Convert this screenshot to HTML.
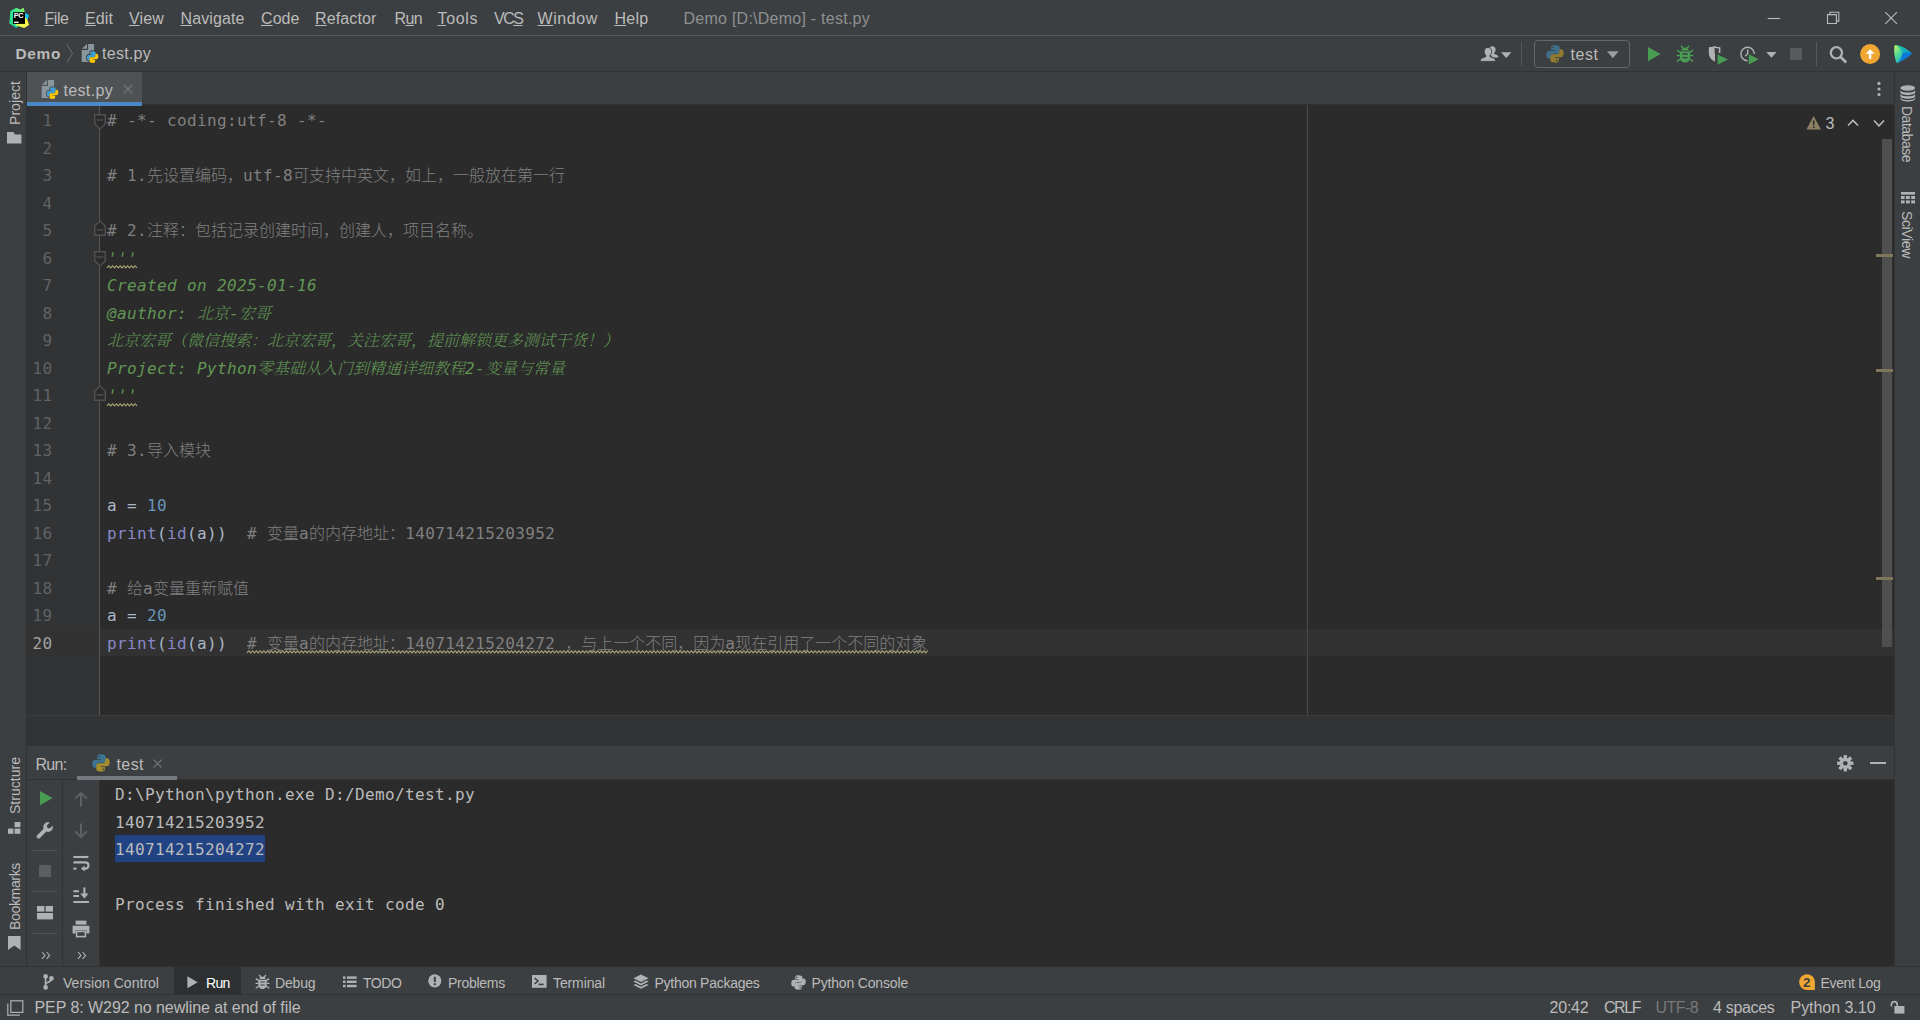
<!DOCTYPE html>
<html lang="zh">
<head>
<meta charset="utf-8">
<title>Demo [D:\Demo] - test.py</title>
<style>
*{box-sizing:border-box;margin:0;padding:0}
html,body{width:1920px;height:1020px;overflow:hidden;background:#3c3f41}
body{position:relative;font-family:"Liberation Sans","Noto Sans CJK SC",sans-serif;color:#bbb;font-size:16px;-webkit-font-smoothing:antialiased}
.a{position:absolute}
.t{position:absolute;white-space:pre;line-height:20px;height:20px}
.u{font-size:16px;color:#bbbbbb}
.s{font-size:14px;color:#bbbbbb}
.m u{text-decoration:underline;text-underline-offset:0.5px;text-decoration-thickness:1px}
.code{position:absolute;white-space:pre;font-family:"DejaVu Sans Mono","Liberation Mono","Noto Sans CJK SC",monospace;font-size:16px;letter-spacing:0.368px;line-height:27px;height:27px;color:#a9b7c6}
.ln{position:absolute;white-space:pre;font-family:"DejaVu Sans Mono","Liberation Mono",monospace;font-size:16px;letter-spacing:0.368px;line-height:27px;height:27px;color:#606366;width:60px;text-align:right;left:-7.5px}
.cj{font-family:"Noto Sans CJK SC",sans-serif;font-size:16px;letter-spacing:0;font-weight:300;line-height:0}
.cji{font-family:"Noto Serif CJK SC","Noto Sans CJK SC",serif;font-size:16px;letter-spacing:0;font-style:italic;line-height:0;font-weight:300}
.c{color:#808080}
.g{color:#629755;font-style:italic}
.q{display:inline-block;transform:skewX(-12deg);font-style:normal}
.n{color:#6897bb}
.b{color:#8888c6}
.con{position:absolute;white-space:pre;font-family:"DejaVu Sans Mono","Liberation Mono",monospace;font-size:16px;letter-spacing:0.368px;line-height:27px;height:27px;color:#bbbbbb;left:115px}
.v{position:absolute;white-space:pre;font-size:14px;color:#bbb;line-height:16px;height:16px;transform-origin:0 0}
svg{position:absolute;overflow:visible}
</style>
</head>
<body>
<div class="a" style="left:0;top:0;width:1920px;height:35px;background:#3c3f41"></div>
<div class="a" style="left:0;top:35px;width:1920px;height:1px;background:#555759"></div>
<svg style="left:9px;top:7px" width="21" height="22" viewBox="0 0 21 22">
<defs>
<linearGradient id="pg1" x1="0" y1="1" x2="1" y2="0"><stop offset="0" stop-color="#1ed68c"/><stop offset="0.55" stop-color="#2fe58f"/><stop offset="1" stop-color="#9bf25c"/></linearGradient>
<linearGradient id="pg2" x1="0" y1="1" x2="1" y2="0"><stop offset="0" stop-color="#8ef564"/><stop offset="0.35" stop-color="#f3f74b"/><stop offset="1" stop-color="#f7f24a"/></linearGradient>
</defs>
<path d="M0.3 16.4 L1.4 4 L7.4 0.8 L11 2.4 L14.7 0.7 L15.9 6 L16 14 L7.2 20.8 Z" fill="url(#pg1)"/>
<path d="M15.9 9.4 L17.6 10.4 L20.1 18 L15.2 21.1 L6.4 18.6 L7.2 14 Z" fill="url(#pg2)"/>
<path d="M15.9 5.6 L20.1 8.4 L18.6 12.4 L15.9 10.2 Z" fill="#10c6f4"/>
<path d="M5.6 18.2 L8 20.2 L7.2 20.9 L4.4 19 Z" fill="#14b6c8"/>
<rect x="4" y="5.2" width="12" height="11.7" fill="#000"/>
<text x="4.7" y="11.3" font-family="Liberation Sans,sans-serif" font-weight="bold" font-size="7.3" fill="#fff" letter-spacing="-0.35">PC</text>
<rect x="5" y="14.6" width="4.7" height="1.3" fill="#fff"/>
</svg>
<div class="t u m" style="letter-spacing:-0.449px;left:44.5px;top:9px"><u>F</u>ile</div>
<div class="t u m" style="letter-spacing:0.105px;left:85px;top:9px"><u>E</u>dit</div>
<div class="t u m" style="letter-spacing:0.148px;left:129px;top:9px"><u>V</u>iew</div>
<div class="t u m" style="letter-spacing:0.105px;left:180.5px;top:9px"><u>N</u>avigate</div>
<div class="t u m" style="letter-spacing:0.059px;left:261px;top:9px"><u>C</u>ode</div>
<div class="t u m" style="letter-spacing:0.127px;left:315px;top:9px"><u>R</u>efactor</div>
<div class="t u m" style="letter-spacing:-0.625px;left:394.5px;top:9px">R<u>u</u>n</div>
<div class="t u m" style="letter-spacing:0.628px;left:437.5px;top:9px"><u>T</u>ools</div>
<div class="t u m" style="letter-spacing:-1.469px;left:494px;top:9px">VC<u>S</u></div>
<div class="t u m" style="letter-spacing:0.596px;left:537.5px;top:9px"><u>W</u>indow</div>
<div class="t u m" style="letter-spacing:0.270px;left:614.5px;top:9px"><u>H</u>elp</div>
<div class="t u" style="letter-spacing:0.250px;left:683.5px;top:9px;color:#8e9092">Demo [D:\Demo] - test.py</div>
<svg style="left:1760px;top:6px" width="150" height="24" viewBox="0 0 150 24" fill="none" stroke="#bbbbbb" stroke-width="1.1">
<path d="M7.7 12.5 H20.2"/>
<path d="M67.5 8.6 H76.4 V17.5 H67.5 Z M69.9 8.6 V6.2 H78.8 V15.1 H76.4"/>
<path d="M125.3 6.2 L136.9 17.8 M136.9 6.2 L125.3 17.8"/>
</svg>

<div class="a" style="left:0;top:36px;width:1920px;height:35px;background:#3c3f41"></div>
<div class="a" style="left:0;top:71px;width:1920px;height:1px;background:#323232"></div>
<div class="t u" style="letter-spacing:0.684px;left:15.5px;top:43.5px;font-weight:bold;font-size:15.4px">Demo</div>
<svg style="left:66px;top:44px" width="8" height="19" viewBox="0 0 8 19" fill="none" stroke="#6b6e70" stroke-width="1"><path d="M1 0.5 L6.5 9.5 L1 18.5"/></svg>
<svg style="left:81px;top:44px" width="18" height="20" viewBox="0 0 18 20">
<path d="M7.1 0 H13.1 V18 H0.7 V6.1 H7.1z" fill="#8a969e"/><path d="M0.9 4.8 L6 0.1 V4.8z" fill="#8a969e"/>
<g transform="translate(5.7 7) scale(0.655 0.678)"><path d="M8.9 0.3 c-3.6 0 -3.8 1.6 -3.8 2.6 v2.1 h4 v0.8 h-5.9 c-1.6 0 -2.9 1.2 -2.9 4 c0 2.8 1.2 4 2.7 4 h1.6 v-2.4 c0 -1.6 1.2 -2.7 2.7 -2.7 h4 c1.3 0 2.4 -1 2.4 -2.4 v-3.4 c0 -1.3 -1.2 -2.6 -4.8 -2.6z" fill="#3c3f41" stroke="#3c3f41" stroke-width="2.6"/><path d="M9.1 17.7 c3.6 0 3.8 -1.6 3.8 -2.6 v-2.1 h-4 v-0.8 h5.9 c1.6 0 2.9 -1.2 2.9 -4 c0 -2.8 -1.2 -4 -2.7 -4 h-1.6 v2.4 c0 1.6 -1.2 2.7 -2.7 2.7 h-4 c-1.3 0 -2.4 1 -2.4 2.4 v3.4 c0 1.3 1.2 2.6 4.8 2.6z" fill="#3c3f41" stroke="#3c3f41" stroke-width="2.6"/>
<path d="M8.9 0.3 c-3.6 0 -3.8 1.6 -3.8 2.6 v2.1 h4 v0.8 h-5.9 c-1.6 0 -2.9 1.2 -2.9 4 c0 2.8 1.2 4 2.7 4 h1.6 v-2.4 c0 -1.6 1.2 -2.7 2.7 -2.7 h4 c1.3 0 2.4 -1 2.4 -2.4 v-3.4 c0 -1.3 -1.2 -2.6 -4.8 -2.6z" fill="#40a0da"/><path d="M9.1 17.7 c3.6 0 3.8 -1.6 3.8 -2.6 v-2.1 h-4 v-0.8 h5.9 c1.6 0 2.9 -1.2 2.9 -4 c0 -2.8 -1.2 -4 -2.7 -4 h-1.6 v2.4 c0 1.6 -1.2 2.7 -2.7 2.7 h-4 c-1.3 0 -2.4 1 -2.4 2.4 v3.4 c0 1.3 1.2 2.6 4.8 2.6z" fill="#fcc600"/></g>
</svg>
<div class="t u" style="letter-spacing:0.266px;left:102px;top:43.5px">test.py</div>
<!-- right toolbar -->
<svg style="left:1480px;top:46px" width="34" height="16" viewBox="0 0 34 16">
<path d="M12.6 0.2 c1.8 0 3 1.5 3 3.4 c0 1.4 -0.6 2.6 -1.5 3.3 v0.9 l3.3 1.5 c0.5 0.2 0.8 0.7 0.8 1.3 v1 h-5.4 l-2.6 -3 v-1.5 c-1 -0.7 -1.4 -2 -1.4 -3.4 c0 -1.9 1.6 -3.5 3.8 -3.5z" fill="#afb1b3"/>
<path d="M8 1.4 c2.2 0 3.7 1.8 3.7 4.1 c0 1.7 -0.7 3.1 -1.8 3.9 v1.1 l4.4 2 c0.7 0.3 1.1 0.9 1.1 1.7 v1.2 h-15 v-1.2 c0 -0.8 0.4 -1.4 1.1 -1.7 l4.5 -2 v-1.1 c-1.1 -0.8 -1.8 -2.2 -1.8 -3.9 c0 -2.3 1.6 -4.1 3.8 -4.1z" fill="#afb1b3" stroke="#3c3f41" stroke-width="0.9"/>
<path d="M21 6.2 h10.5 l-5.25 5.8z" fill="#afb1b3"/>
</svg>
<div class="a" style="left:1521px;top:42px;width:1px;height:24px;background:#555759"></div>
<div class="a" style="left:1534px;top:40px;width:96px;height:28px;border:1px solid #646769;border-radius:4px"></div>
<svg style="left:1546px;top:45px" width="18" height="18" viewBox="0 0 18 18">
<path d="M8.9 0.3 c-3.6 0 -3.8 1.6 -3.8 2.6 v2.1 h4 v0.8 h-5.9 c-1.6 0 -2.9 1.2 -2.9 4 c0 2.8 1.2 4 2.7 4 h1.6 v-2.4 c0 -1.6 1.2 -2.7 2.7 -2.7 h4 c1.3 0 2.4 -1 2.4 -2.4 v-3.4 c0 -1.3 -1.2 -2.6 -4.8 -2.6z" fill="#3d6f8c"/>
<circle cx="6.9" cy="2.6" r="0.8" fill="#3c3f41"/>
<path d="M9.1 17.7 c3.6 0 3.8 -1.6 3.8 -2.6 v-2.1 h-4 v-0.8 h5.9 c1.6 0 2.9 -1.2 2.9 -4 c0 -2.8 -1.2 -4 -2.7 -4 h-1.6 v2.4 c0 1.6 -1.2 2.7 -2.7 2.7 h-4 c-1.3 0 -2.4 1 -2.4 2.4 v3.4 c0 1.3 1.2 2.6 4.8 2.6z" fill="#907a30"/>
<circle cx="11.1" cy="15.4" r="0.8" fill="#3c3f41"/>
</svg>
<div class="t u" style="letter-spacing:0.551px;left:1570.5px;top:44.5px">test</div>
<svg style="left:1607px;top:51px" width="12" height="8" viewBox="0 0 12 8"><path d="M0 0.3 H11.6 L5.8 7.2z" fill="#9a9da0"/></svg>
<svg style="left:1647px;top:46px" width="15" height="16" viewBox="0 0 15 16"><path d="M1 1 L13.6 8 L1 15.2z" fill="#499c54"/></svg>
<svg style="left:1676px;top:45px" width="18" height="18" viewBox="0 0 18 18">
<g fill="none" stroke="#499c54" stroke-width="1.5"><path d="M5 0.6 L7 3.2 M13 0.6 L11 3.2"/><path d="M1 5 L4.4 7.4 M17 5 L13.6 7.4 M0.6 10.6 H4.4 M17.4 10.6 H13.6 M1 16.4 L4.6 13.8 M17 16.4 L13.4 13.8"/></g>
<path d="M5.2 5.4 C5.4 3.6 7 2.4 9 2.4 C11 2.4 12.6 3.6 12.8 5.4z" fill="#499c54"/>
<path d="M4 6.4 H14 V12.4 C14 15.4 11.8 17.6 9 17.6 C6.2 17.6 4 15.4 4 12.4z" fill="#499c54"/>
<path d="M6.4 9 H11.6 M6.4 12.6 H11.6" stroke="#3c3f41" stroke-width="1.4"/>
</svg>
<svg style="left:1708px;top:46px" width="21" height="19" viewBox="0 0 21 19">
<path d="M0.8 1.2 C3 1.2 5 0.8 6.6 0 C8.2 0.8 10.2 1.2 12.4 1.2 V7 H7 V15.6 C3.2 13.8 0.8 10.8 0.8 6.4z" fill="#afb1b3"/>
<path d="M6.6 1.8 V7 H10.8 V2.6 C9.2 2.5 7.8 2.2 6.6 1.8z" fill="#3c3f41"/>
<path d="M9.6 8.4 L20 13.6 L9.6 18.8z" fill="#499c54"/>
</svg>
<svg style="left:1739px;top:45px" width="40" height="20" viewBox="0 0 40 20">
<path d="M8.6 1.6 A7.4 7.4 0 1 0 8.6 16.4 V15 A6 6 0 1 1 14.6 9 H16 A7.4 7.4 0 0 0 8.6 1.6z" fill="#afb1b3"/>
<path d="M8 4.6 H9.4 V9 L6.6 11.8 L5.6 10.8 L8 8.4z" fill="#afb1b3"/>
<path d="M9.8 9.2 L19.6 14.2 L9.8 19.4z" fill="#499c54"/>
<path d="M27.2 7 H37.6 L32.4 12.8z" fill="#afb1b3"/>
</svg>
<div class="a" style="left:1790px;top:47.5px;width:12px;height:12.5px;background:#585a5c"></div>
<div class="a" style="left:1816px;top:42px;width:1px;height:24px;background:#555759"></div>
<svg style="left:1829px;top:45px" width="19" height="19" viewBox="0 0 19 19" fill="none" stroke="#afb1b3"><circle cx="7.4" cy="7.8" r="5.6" stroke-width="2.3"/><path d="M11.4 11.8 L17.2 17.4" stroke-width="2.8"/></svg>
<svg style="left:1859px;top:43px" width="22" height="22" viewBox="0 0 22 22"><circle cx="11.1" cy="11" r="10" fill="#f0a732"/><path d="M11.1 6.2 L15.6 10.8 H12.3 V15.8 H9.9 V10.8 H6.6z" fill="#fff"/></svg>
<svg style="left:1893px;top:44px" width="20" height="20" viewBox="0 0 20 20">
<defs><linearGradient id="cw1" x1="0" y1="0" x2="1" y2="1"><stop offset="0" stop-color="#21d789"/><stop offset="1" stop-color="#087cfa"/></linearGradient>
<linearGradient id="cw2" x1="0" y1="0" x2="0.6" y2="1"><stop offset="0" stop-color="#d7f05a"/><stop offset="0.5" stop-color="#5fe08c"/><stop offset="1" stop-color="#1fb4c4"/></linearGradient></defs>
<path d="M3 1 C2.2 1 1.6 1.6 1.5 2.6 C1 8 1.6 13 3.2 17.8 C3.5 18.8 4.4 19.2 5.4 18.6 C10.4 16.4 14.6 13.6 18 10.6 C18.8 10 18.8 9.2 18 8.6 C14 4.8 9 2 3 1z" fill="url(#cw1)"/>
<path d="M3 1 C2.2 1 1.6 1.6 1.5 2.6 C1 8 1.6 13 3.2 17.8 C3.5 18.8 4.4 19.2 5.4 18.6 C7.6 15.6 9 12.8 9.4 9.6 C8.6 6 6.2 3 3 1z" fill="url(#cw2)"/>
<path d="M9.4 9.6 C12.4 8.4 15.2 8.2 18.4 9.4 C18.6 9.8 18.4 10.2 18 10.6 C14.6 13.6 10.4 16.4 5.4 18.6 C7.6 15.6 9 12.8 9.4 9.6z" fill="#0a6fd8" opacity="0.8"/>
</svg>

<div class="a" style="left:27px;top:72px;width:1867px;height:33px;background:#3c3f41"></div>
<div class="a" style="left:27px;top:104px;width:1867px;height:1px;background:#323232"></div>
<div class="a" style="left:27px;top:72px;width:115px;height:30px;background:#4e5254"></div>
<div class="a" style="left:27px;top:102px;width:115px;height:4px;background:#4a88c7;z-index:5"></div>
<svg style="left:41px;top:80px" width="18" height="20" viewBox="0 0 18 20">
<path d="M7.1 0 H13.1 V18 H0.7 V6.1 H7.1z" fill="#8a969e"/><path d="M0.9 4.8 L6 0.1 V4.8z" fill="#8a969e"/>
<g transform="translate(5.7 7) scale(0.655 0.678)"><path d="M8.9 0.3 c-3.6 0 -3.8 1.6 -3.8 2.6 v2.1 h4 v0.8 h-5.9 c-1.6 0 -2.9 1.2 -2.9 4 c0 2.8 1.2 4 2.7 4 h1.6 v-2.4 c0 -1.6 1.2 -2.7 2.7 -2.7 h4 c1.3 0 2.4 -1 2.4 -2.4 v-3.4 c0 -1.3 -1.2 -2.6 -4.8 -2.6z" fill="#4e5254" stroke="#4e5254" stroke-width="2.6"/><path d="M9.1 17.7 c3.6 0 3.8 -1.6 3.8 -2.6 v-2.1 h-4 v-0.8 h5.9 c1.6 0 2.9 -1.2 2.9 -4 c0 -2.8 -1.2 -4 -2.7 -4 h-1.6 v2.4 c0 1.6 -1.2 2.7 -2.7 2.7 h-4 c-1.3 0 -2.4 1 -2.4 2.4 v3.4 c0 1.3 1.2 2.6 4.8 2.6z" fill="#4e5254" stroke="#4e5254" stroke-width="2.6"/>
<path d="M8.9 0.3 c-3.6 0 -3.8 1.6 -3.8 2.6 v2.1 h4 v0.8 h-5.9 c-1.6 0 -2.9 1.2 -2.9 4 c0 2.8 1.2 4 2.7 4 h1.6 v-2.4 c0 -1.6 1.2 -2.7 2.7 -2.7 h4 c1.3 0 2.4 -1 2.4 -2.4 v-3.4 c0 -1.3 -1.2 -2.6 -4.8 -2.6z" fill="#40a0da"/><path d="M9.1 17.7 c3.6 0 3.8 -1.6 3.8 -2.6 v-2.1 h-4 v-0.8 h5.9 c1.6 0 2.9 -1.2 2.9 -4 c0 -2.8 -1.2 -4 -2.7 -4 h-1.6 v2.4 c0 1.6 -1.2 2.7 -2.7 2.7 h-4 c-1.3 0 -2.4 1 -2.4 2.4 v3.4 c0 1.3 1.2 2.6 4.8 2.6z" fill="#fcc600"/></g>
</svg>
<div class="t u" style="letter-spacing:0.337px;left:63.5px;top:80.5px">test.py</div>
<svg style="left:123px;top:84px" width="10" height="10" viewBox="0 0 10 10" stroke="#7a7e80" stroke-width="1.1" fill="none"><path d="M0.8 0.8 L9.2 9.2 M9.2 0.8 L0.8 9.2"/></svg>
<svg style="left:1876px;top:81px" width="6" height="18" viewBox="0 0 6 18" fill="#afb1b3"><circle cx="3" cy="2.4" r="1.6"/><circle cx="3" cy="8" r="1.6"/><circle cx="3" cy="13.6" r="1.6"/></svg>

<div class="a" style="left:27px;top:105px;width:1867px;height:610px;background:#2b2b2b"></div>
<div class="a" style="left:27px;top:105px;width:72px;height:610px;background:#313335"></div>
<div class="a" style="left:27px;top:629px;width:1867px;height:27px;background:#323232"></div>
<div class="a" style="left:99px;top:105px;width:1px;height:610px;background:#555555"></div>
<div class="a" style="left:1307px;top:105px;width:1px;height:610px;background:#4a4a4a"></div>
<div class="a" style="left:27px;top:715px;width:1867px;height:1px;background:#3a3b3c"></div>
<div class="a" style="left:27px;top:716px;width:1867px;height:30px;background:#313335"></div>
<div class="ln" style="top:107px;color:#606366">1</div>
<div class="ln" style="top:134.5px;color:#606366">2</div>
<div class="ln" style="top:162px;color:#606366">3</div>
<div class="ln" style="top:189.5px;color:#606366">4</div>
<div class="ln" style="top:217px;color:#606366">5</div>
<div class="ln" style="top:244.5px;color:#606366">6</div>
<div class="ln" style="top:272px;color:#606366">7</div>
<div class="ln" style="top:299.5px;color:#606366">8</div>
<div class="ln" style="top:327px;color:#606366">9</div>
<div class="ln" style="top:354.5px;color:#606366">10</div>
<div class="ln" style="top:382px;color:#606366">11</div>
<div class="ln" style="top:409.5px;color:#606366">12</div>
<div class="ln" style="top:437px;color:#606366">13</div>
<div class="ln" style="top:464.5px;color:#606366">14</div>
<div class="ln" style="top:492px;color:#606366">15</div>
<div class="ln" style="top:519.5px;color:#606366">16</div>
<div class="ln" style="top:547px;color:#606366">17</div>
<div class="ln" style="top:574.5px;color:#606366">18</div>
<div class="ln" style="top:602px;color:#606366">19</div>
<div class="ln" style="top:629.5px;color:#a4a3a3">20</div>
<div class="code" style="left:107px;top:107px"><span class="c"># -*- coding:utf-8 -*-</span></div>
<div class="code" style="left:107px;top:162px"><span class="c"># 1.<span class="cj">先设置编码，</span>utf-8<span class="cj">可支持中英文，如上，一般放在第一行</span></span></div>
<div class="code" style="left:107px;top:217px"><span class="c"># 2.<span class="cj">注释：包括记录创建时间，创建人，项目名称。</span></span></div>
<div class="code" style="left:107px;top:244.5px"><span class="g q">'''</span></div>
<div class="code" style="left:107px;top:272px"><span class="g">Created on 2025-01-16</span></div>
<div class="code" style="left:107px;top:299.5px"><span class="g">@author: <span class="cji">北京</span>-<span class="cji">宏哥</span></span></div>
<div class="code" style="left:107px;top:327px"><span class="g"><span class="cji">北京宏哥（微信搜索：北京宏哥，关注宏哥，提前解锁更多测试干货！）</span></span></div>
<div class="code" style="left:107px;top:354.5px"><span class="g">Project: Python<span class="cji">零基础从入门到精通详细教程</span>2-<span class="cji">变量与常量</span></span></div>
<div class="code" style="left:107px;top:382px"><span class="g q">'''</span></div>
<div class="code" style="left:107px;top:437px"><span class="c"># 3.<span class="cj">导入模块</span></span></div>
<div class="code" style="left:107px;top:492px">a = <span class="n">10</span></div>
<div class="code" style="left:107px;top:519.5px"><span class="b">print</span>(<span class="b">id</span>(a))  <span class="c"># <span class="cj">变量</span>a<span class="cj">的内存地址：</span>140714215203952</span></div>
<div class="code" style="left:107px;top:574.5px"><span class="c"># <span class="cj">给</span>a<span class="cj">变量重新赋值</span></span></div>
<div class="code" style="left:107px;top:602px">a = <span class="n">20</span></div>
<div class="code" style="left:107px;top:629.5px"><span class="b">print</span>(<span class="b">id</span>(a))  <span class="c"># <span class="cj">变量</span>a<span class="cj">的内存地址：</span>140714215204272 <span class="cj">，与上一个不同，因为</span>a<span class="cj">现在引用了一个不同的对象</span></span></div>
<svg style="left:107.2px;top:264.7px" width="30" height="4" viewBox="0 0 30 4" fill="none" stroke="#aeaa7a" stroke-width="1.05"><path d="M0 2.9 L1.875 0.7 L3.75 2.9 L5.625 0.7 L7.5 2.9 L9.375 0.7 L11.25 2.9 L13.125 0.7 L15 2.9 L16.875 0.7 L18.75 2.9 L20.625 0.7 L22.5 2.9 L24.375 0.7 L26.25 2.9 L28.125 0.7 L30 2.9"/></svg>
<svg style="left:107.2px;top:402.7px" width="30" height="4" viewBox="0 0 30 4" fill="none" stroke="#aeaa7a" stroke-width="1.05"><path d="M0 2.9 L1.875 0.7 L3.75 2.9 L5.625 0.7 L7.5 2.9 L9.375 0.7 L11.25 2.9 L13.125 0.7 L15 2.9 L16.875 0.7 L18.75 2.9 L20.625 0.7 L22.5 2.9 L24.375 0.7 L26.25 2.9 L28.125 0.7 L30 2.9"/></svg>
<svg style="left:247.2px;top:649.7px" width="680" height="4" viewBox="0 0 680 4" fill="none" stroke="#aeaa7a" stroke-width="1.05"><path d="M0 2.9 L1.875 0.7 L3.75 2.9 L5.625 0.7 L7.5 2.9 L9.375 0.7 L11.25 2.9 L13.125 0.7 L15 2.9 L16.875 0.7 L18.75 2.9 L20.625 0.7 L22.5 2.9 L24.375 0.7 L26.25 2.9 L28.125 0.7 L30 2.9 L31.875 0.7 L33.75 2.9 L35.625 0.7 L37.5 2.9 L39.375 0.7 L41.25 2.9 L43.125 0.7 L45 2.9 L46.875 0.7 L48.75 2.9 L50.625 0.7 L52.5 2.9 L54.375 0.7 L56.25 2.9 L58.125 0.7 L60 2.9 L61.875 0.7 L63.75 2.9 L65.625 0.7 L67.5 2.9 L69.375 0.7 L71.25 2.9 L73.125 0.7 L75 2.9 L76.875 0.7 L78.75 2.9 L80.625 0.7 L82.5 2.9 L84.375 0.7 L86.25 2.9 L88.125 0.7 L90 2.9 L91.875 0.7 L93.75 2.9 L95.625 0.7 L97.5 2.9 L99.375 0.7 L101.25 2.9 L103.125 0.7 L105 2.9 L106.875 0.7 L108.75 2.9 L110.625 0.7 L112.5 2.9 L114.375 0.7 L116.25 2.9 L118.125 0.7 L120 2.9 L121.875 0.7 L123.75 2.9 L125.625 0.7 L127.5 2.9 L129.375 0.7 L131.25 2.9 L133.125 0.7 L135 2.9 L136.875 0.7 L138.75 2.9 L140.625 0.7 L142.5 2.9 L144.375 0.7 L146.25 2.9 L148.125 0.7 L150 2.9 L151.875 0.7 L153.75 2.9 L155.625 0.7 L157.5 2.9 L159.375 0.7 L161.25 2.9 L163.125 0.7 L165 2.9 L166.875 0.7 L168.75 2.9 L170.625 0.7 L172.5 2.9 L174.375 0.7 L176.25 2.9 L178.125 0.7 L180 2.9 L181.875 0.7 L183.75 2.9 L185.625 0.7 L187.5 2.9 L189.375 0.7 L191.25 2.9 L193.125 0.7 L195 2.9 L196.875 0.7 L198.75 2.9 L200.625 0.7 L202.5 2.9 L204.375 0.7 L206.25 2.9 L208.125 0.7 L210 2.9 L211.875 0.7 L213.75 2.9 L215.625 0.7 L217.5 2.9 L219.375 0.7 L221.25 2.9 L223.125 0.7 L225 2.9 L226.875 0.7 L228.75 2.9 L230.625 0.7 L232.5 2.9 L234.375 0.7 L236.25 2.9 L238.125 0.7 L240 2.9 L241.875 0.7 L243.75 2.9 L245.625 0.7 L247.5 2.9 L249.375 0.7 L251.25 2.9 L253.125 0.7 L255 2.9 L256.875 0.7 L258.75 2.9 L260.625 0.7 L262.5 2.9 L264.375 0.7 L266.25 2.9 L268.125 0.7 L270 2.9 L271.875 0.7 L273.75 2.9 L275.625 0.7 L277.5 2.9 L279.375 0.7 L281.25 2.9 L283.125 0.7 L285 2.9 L286.875 0.7 L288.75 2.9 L290.625 0.7 L292.5 2.9 L294.375 0.7 L296.25 2.9 L298.125 0.7 L300 2.9 L301.875 0.7 L303.75 2.9 L305.625 0.7 L307.5 2.9 L309.375 0.7 L311.25 2.9 L313.125 0.7 L315 2.9 L316.875 0.7 L318.75 2.9 L320.625 0.7 L322.5 2.9 L324.375 0.7 L326.25 2.9 L328.125 0.7 L330 2.9 L331.875 0.7 L333.75 2.9 L335.625 0.7 L337.5 2.9 L339.375 0.7 L341.25 2.9 L343.125 0.7 L345 2.9 L346.875 0.7 L348.75 2.9 L350.625 0.7 L352.5 2.9 L354.375 0.7 L356.25 2.9 L358.125 0.7 L360 2.9 L361.875 0.7 L363.75 2.9 L365.625 0.7 L367.5 2.9 L369.375 0.7 L371.25 2.9 L373.125 0.7 L375 2.9 L376.875 0.7 L378.75 2.9 L380.625 0.7 L382.5 2.9 L384.375 0.7 L386.25 2.9 L388.125 0.7 L390 2.9 L391.875 0.7 L393.75 2.9 L395.625 0.7 L397.5 2.9 L399.375 0.7 L401.25 2.9 L403.125 0.7 L405 2.9 L406.875 0.7 L408.75 2.9 L410.625 0.7 L412.5 2.9 L414.375 0.7 L416.25 2.9 L418.125 0.7 L420 2.9 L421.875 0.7 L423.75 2.9 L425.625 0.7 L427.5 2.9 L429.375 0.7 L431.25 2.9 L433.125 0.7 L435 2.9 L436.875 0.7 L438.75 2.9 L440.625 0.7 L442.5 2.9 L444.375 0.7 L446.25 2.9 L448.125 0.7 L450 2.9 L451.875 0.7 L453.75 2.9 L455.625 0.7 L457.5 2.9 L459.375 0.7 L461.25 2.9 L463.125 0.7 L465 2.9 L466.875 0.7 L468.75 2.9 L470.625 0.7 L472.5 2.9 L474.375 0.7 L476.25 2.9 L478.125 0.7 L480 2.9 L481.875 0.7 L483.75 2.9 L485.625 0.7 L487.5 2.9 L489.375 0.7 L491.25 2.9 L493.125 0.7 L495 2.9 L496.875 0.7 L498.75 2.9 L500.625 0.7 L502.5 2.9 L504.375 0.7 L506.25 2.9 L508.125 0.7 L510 2.9 L511.875 0.7 L513.75 2.9 L515.625 0.7 L517.5 2.9 L519.375 0.7 L521.25 2.9 L523.125 0.7 L525 2.9 L526.875 0.7 L528.75 2.9 L530.625 0.7 L532.5 2.9 L534.375 0.7 L536.25 2.9 L538.125 0.7 L540 2.9 L541.875 0.7 L543.75 2.9 L545.625 0.7 L547.5 2.9 L549.375 0.7 L551.25 2.9 L553.125 0.7 L555 2.9 L556.875 0.7 L558.75 2.9 L560.625 0.7 L562.5 2.9 L564.375 0.7 L566.25 2.9 L568.125 0.7 L570 2.9 L571.875 0.7 L573.75 2.9 L575.625 0.7 L577.5 2.9 L579.375 0.7 L581.25 2.9 L583.125 0.7 L585 2.9 L586.875 0.7 L588.75 2.9 L590.625 0.7 L592.5 2.9 L594.375 0.7 L596.25 2.9 L598.125 0.7 L600 2.9 L601.875 0.7 L603.75 2.9 L605.625 0.7 L607.5 2.9 L609.375 0.7 L611.25 2.9 L613.125 0.7 L615 2.9 L616.875 0.7 L618.75 2.9 L620.625 0.7 L622.5 2.9 L624.375 0.7 L626.25 2.9 L628.125 0.7 L630 2.9 L631.875 0.7 L633.75 2.9 L635.625 0.7 L637.5 2.9 L639.375 0.7 L641.25 2.9 L643.125 0.7 L645 2.9 L646.875 0.7 L648.75 2.9 L650.625 0.7 L652.5 2.9 L654.375 0.7 L656.25 2.9 L658.125 0.7 L660 2.9 L661.875 0.7 L663.75 2.9 L665.625 0.7 L667.5 2.9 L669.375 0.7 L671.25 2.9 L673.125 0.7 L675 2.9 L676.875 0.7 L678.75 2.9 L680.625 0.7"/></svg>
<svg style="left:94px;top:113.7px" width="12" height="16" viewBox="0 0 12 16"><path d="M0.75 0.75 H11.25 V10 L6 14.9 L0.75 10z" fill="#2b2b2b" stroke="#525252" stroke-width="1.4"/><path d="M2.4 6 H9.2" stroke="#5c5c5c" stroke-width="1"/></svg>
<svg style="left:94px;top:220.2px" width="12" height="16" viewBox="0 0 12 16"><path d="M0.75 15.25 H11.25 V6 L6 1.1 L0.75 6z" fill="#2b2b2b" stroke="#525252" stroke-width="1.4"/><path d="M2.4 10 H9.2" stroke="#5c5c5c" stroke-width="1"/></svg>
<svg style="left:94px;top:251.2px" width="12" height="16" viewBox="0 0 12 16"><path d="M0.75 0.75 H11.25 V10 L6 14.9 L0.75 10z" fill="#2b2b2b" stroke="#525252" stroke-width="1.4"/><path d="M2.4 6 H9.2" stroke="#5c5c5c" stroke-width="1"/></svg>
<svg style="left:94px;top:385.2px" width="12" height="16" viewBox="0 0 12 16"><path d="M0.75 15.25 H11.25 V6 L6 1.1 L0.75 6z" fill="#2b2b2b" stroke="#525252" stroke-width="1.4"/><path d="M2.4 10 H9.2" stroke="#5c5c5c" stroke-width="1"/></svg>
<svg style="left:1806px;top:115px" width="16" height="16" viewBox="0 0 16 16"><path d="M7.6 1 L15 14.6 H0.4z" fill="#8c8163"/><path d="M6.8 5.4 H8.6 L8.3 10.4 H7.1z M6.9 11.4 H8.5 V13 H6.9z" fill="#2b2b2b"/></svg>
<div class="t u" style="left:1825.5px;top:114px">3</div>
<svg style="left:1847px;top:118px" width="40" height="10" viewBox="0 0 40 10" fill="none" stroke="#bbbbbb" stroke-width="1.5"><path d="M1 7.6 L6 2.4 L11 7.6"/><path d="M27 2.6 L32 7.8 L37 2.6"/></svg>
<div class="a" style="left:1882px;top:139px;width:10px;height:508px;background:#4f4f4f"></div>
<div class="a" style="left:1876px;top:254px;width:17px;height:3px;background:#80775a"></div>
<div class="a" style="left:1876px;top:369px;width:17px;height:3px;background:#80775a"></div>
<div class="a" style="left:1876px;top:577px;width:17px;height:3px;background:#80775a"></div>

<div class="a" style="left:27px;top:746px;width:1867px;height:34px;background:#3c3f41"></div>
<div class="a" style="left:27px;top:779px;width:1867px;height:1px;background:#323232"></div>
<div class="a" style="left:27px;top:780px;width:1867px;height:186px;background:#2b2b2b"></div>
<div class="a" style="left:27px;top:780px;width:72px;height:186px;background:#3c3f41"></div>
<div class="a" style="left:62px;top:780px;width:1px;height:186px;background:#323232"></div>
<div class="a" style="left:99px;top:780px;width:1px;height:186px;background:#323232"></div>
<div class="t u" style="letter-spacing:-0.699px;left:35.5px;top:754.5px">Run:</div>
<svg style="left:92px;top:754px" width="18" height="18" viewBox="0 0 18 18">
<path d="M8.9 0.3 c-3.6 0 -3.8 1.6 -3.8 2.6 v2.1 h4 v0.8 h-5.9 c-1.6 0 -2.9 1.2 -2.9 4 c0 2.8 1.2 4 2.7 4 h1.6 v-2.4 c0 -1.6 1.2 -2.7 2.7 -2.7 h4 c1.3 0 2.4 -1 2.4 -2.4 v-3.4 c0 -1.3 -1.2 -2.6 -4.8 -2.6z" fill="#3e7391"/>
<circle cx="6.9" cy="2.6" r="0.8" fill="#3c3f41"/>
<path d="M9.1 17.7 c3.6 0 3.8 -1.6 3.8 -2.6 v-2.1 h-4 v-0.8 h5.9 c1.6 0 2.9 -1.2 2.9 -4 c0 -2.8 -1.2 -4 -2.7 -4 h-1.6 v2.4 c0 1.6 -1.2 2.7 -2.7 2.7 h-4 c-1.3 0 -2.4 1 -2.4 2.4 v3.4 c0 1.3 1.2 2.6 4.8 2.6z" fill="#a58d2e"/>
<circle cx="11.1" cy="15.4" r="0.8" fill="#3c3f41"/>
</svg>
<div class="t u" style="letter-spacing:0.426px;left:116.5px;top:754.5px">test</div>
<svg style="left:153.4px;top:759.4px" width="9.2" height="9.2" viewBox="0 0 10 10" stroke="#7a7e80" stroke-width="1.1" fill="none"><path d="M0.6 0.6 L9.4 9.4 M9.4 0.6 L0.6 9.4"/></svg>
<div class="a" style="left:76.5px;top:776.2px;width:100px;height:3.6px;background:#747a80"></div>
<!-- gear / minimize -->
<svg style="left:1837px;top:755px" width="17" height="17" viewBox="0 0 17 17"><g transform="translate(8.3 8.3)" fill="#afb1b3">
<circle r="5.6"/>
<rect x="-1.7" y="-8.2" width="3.4" height="16.4" rx="0.4"/><rect x="-1.7" y="-8.2" width="3.4" height="16.4" rx="0.4" transform="rotate(45)"/><rect x="-1.7" y="-8.2" width="3.4" height="16.4" rx="0.4" transform="rotate(90)"/><rect x="-1.7" y="-8.2" width="3.4" height="16.4" rx="0.4" transform="rotate(135)"/>
<circle r="2.3" fill="#3c3f41"/></g></svg>
<div class="a" style="left:1870px;top:762px;width:16px;height:2px;background:#afb1b3"></div>
<!-- left toolbar col 1 -->
<svg style="left:38.5px;top:790px" width="15" height="16" viewBox="0 0 15 16"><path d="M1 1 L13.6 8 L1 15.2z" fill="#499c54"/></svg>
<svg style="left:36px;top:821px" width="18" height="18" viewBox="0 0 18 18"><path d="M16.6 4.6 C17.2 6.6 16.6 8.6 15.2 9.8 C13.8 11 12 11.2 10.4 10.6 L4 17 C3.2 17.8 2 17.8 1.2 17 C0.4 16.2 0.4 15 1.2 14.2 L7.6 7.8 C7 6.2 7.2 4.2 8.6 2.8 C10 1.4 12 1 13.8 1.6 L10.8 4.6 L11.4 6.8 L13.6 7.4z" fill="#afb1b3"/></svg>
<div class="a" style="left:33px;top:850px;width:24px;height:1px;background:#515456"></div>
<div class="a" style="left:39px;top:865px;width:12px;height:12px;background:#5c5e60"></div>
<div class="a" style="left:33px;top:891px;width:24px;height:1px;background:#515456"></div>
<svg style="left:37px;top:906px" width="16" height="14" viewBox="0 0 16 14" fill="#afb1b3"><rect x="0" y="0" width="7.4" height="5.6"/><rect x="8.6" y="0" width="7.4" height="5.6"/><rect x="0" y="7" width="16" height="6.4"/></svg>
<div class="a" style="left:33px;top:933px;width:24px;height:1px;background:#515456"></div>
<svg style="left:41px;top:951px" width="10" height="9" viewBox="0 0 10 9" fill="none" stroke="#afb1b3" stroke-width="1.1"><path d="M1 1 L4 4.4 L1 7.8 M5.6 1 L8.6 4.4 L5.6 7.8"/></svg>
<!-- left toolbar col 2 -->
<svg style="left:74px;top:790.6px" width="14" height="16" viewBox="0 0 14 16" fill="none" stroke="#5e6062" stroke-width="2"><path d="M7 15.4 V2 M1.2 7.6 L7 1.8 L12.8 7.6"/></svg>
<svg style="left:74px;top:822.6px" width="14" height="16" viewBox="0 0 14 16" fill="none" stroke="#5e6062" stroke-width="2"><path d="M7 0.6 V14 M1.2 8.4 L7 14.2 L12.8 8.4"/></svg>
<svg style="left:73px;top:856px" width="17" height="17" viewBox="0 0 17 17" fill="none" stroke="#afb1b3" stroke-width="2.1"><path d="M0.4 1 H15.4"/><path d="M0.4 6.4 H12.2 C16.6 6.4 16.6 12.6 12.2 12.6 H8.6"/><path d="M0.4 12.6 H3.4" /><path d="M8.4 12.6 L11.6 9.6 V15.6z" fill="#afb1b3" stroke="none"/></svg>
<svg style="left:73px;top:887px" width="17" height="17" viewBox="0 0 17 17" fill="none" stroke="#afb1b3" stroke-width="2.1"><path d="M0.4 4.2 H6 M0.4 9 H6 M0.4 15 H16"/><path d="M11.4 0.4 V10"/><path d="M7.2 6.4 H15.6 L11.4 11.4z" fill="#afb1b3" stroke="none"/></svg>
<svg style="left:72px;top:920px" width="18" height="18" viewBox="0 0 18 18" fill="#afb1b3"><rect x="3.6" y="0.6" width="10.8" height="4"/><path d="M0.6 5.8 H17.4 V13.4 H14.4 V10.2 H3.6 V13.4 H0.6z"/><rect x="4.6" y="11.4" width="8.8" height="5.2" fill="none" stroke="#afb1b3" stroke-width="1.6"/></svg>
<svg style="left:77px;top:951px" width="10" height="9" viewBox="0 0 10 9" fill="none" stroke="#afb1b3" stroke-width="1.1"><path d="M1 1 L4 4.4 L1 7.8 M5.6 1 L8.6 4.4 L5.6 7.8"/></svg>
<!-- console -->
<div class="a" style="left:115px;top:835px;width:150px;height:26.5px;background:#214283"></div>
<div class="con" style="top:781px">D:\Python\python.exe D:/Demo/test.py</div>
<div class="con" style="top:808.5px">140714215203952</div>
<div class="con" style="top:836px">140714215204272</div>
<div class="con" style="top:891px">Process finished with exit code 0</div>

<div class="a" style="left:0;top:966px;width:1920px;height:29px;background:#3c3f41"></div>
<div class="a" style="left:0;top:966px;width:1920px;height:1px;background:#323232"></div>
<div class="a" style="left:174px;top:967px;width:67px;height:27px;background:#2d2f30"></div>
<div class="a" style="left:0;top:994px;width:1920px;height:1px;background:#323232"></div>
<div class="a" style="left:0;top:995px;width:1920px;height:25px;background:#3c3f41"></div>
<svg style="left:43px;top:974px" width="11" height="16" viewBox="0 0 11 16" fill="none" stroke="#afb1b3" stroke-width="1.7"><path d="M2.6 2.4 V13.6 M2.6 10.6 C2.6 8 8.4 8.6 8.4 4.8"/><circle cx="2.6" cy="2.4" r="1.5" fill="#afb1b3"/><circle cx="2.6" cy="13.4" r="1.5" fill="#afb1b3"/><circle cx="8.4" cy="4.4" r="1.5" fill="#afb1b3"/></svg>
<div class="t s" style="letter-spacing:0.019px;left:63px;top:973px">Version Control</div>
<svg style="left:187px;top:976px" width="11" height="13" viewBox="0 0 11 13"><path d="M0.4 0.2 L10.6 6.2 L0.4 12.2z" fill="#afb1b3"/></svg>
<div class="t s" style="letter-spacing:-0.729px;left:206px;top:973px;color:#ffffff">Run</div>
<svg style="left:254.5px;top:973.5px" width="15" height="16" viewBox="0 0 18 18">
<g fill="none" stroke="#afb1b3" stroke-width="1.6"><path d="M5 0.6 L7 3.2 M13 0.6 L11 3.2"/><path d="M1 5 L4.4 7.4 M17 5 L13.6 7.4 M0.6 10.6 H4.4 M17.4 10.6 H13.6 M1 16.4 L4.6 13.8 M17 16.4 L13.4 13.8"/></g>
<path d="M5.2 5.4 C5.4 3.6 7 2.4 9 2.4 C11 2.4 12.6 3.6 12.8 5.4z" fill="#afb1b3"/>
<path d="M4 6.4 H14 V12.4 C14 15.4 11.8 17.6 9 17.6 C6.2 17.6 4 15.4 4 12.4z" fill="#afb1b3"/>
<path d="M6.4 9 H11.6 M6.4 12.6 H11.6" stroke="#3c3f41" stroke-width="1.4"/>
</svg>
<div class="t s" style="letter-spacing:-0.153px;left:275px;top:973px">Debug</div>
<svg style="left:343px;top:976px" width="14" height="12" viewBox="0 0 14 12" fill="#afb1b3"><rect x="0" y="0.4" width="2.6" height="2.4"/><rect x="4" y="0.4" width="9.6" height="2.4"/><rect x="0" y="4.6" width="2.6" height="2.4"/><rect x="4" y="4.6" width="9.6" height="2.4"/><rect x="0" y="8.8" width="2.6" height="2.4"/><rect x="4" y="8.8" width="9.6" height="2.4"/></svg>
<div class="t s" style="letter-spacing:-0.426px;left:363px;top:973px">TODO</div>
<svg style="left:427.5px;top:974px" width="14" height="14" viewBox="0 0 14 14"><circle cx="6.8" cy="6.8" r="6.6" fill="#afb1b3"/><rect x="5.8" y="2.8" width="2" height="5.2" fill="#3c3f41"/><rect x="5.8" y="9.2" width="2" height="2" fill="#3c3f41"/></svg>
<div class="t s" style="letter-spacing:-0.268px;left:448px;top:973px">Problems</div>
<svg style="left:532px;top:975px" width="15" height="13" viewBox="0 0 15 13"><rect x="0" y="0" width="14.6" height="12.8" fill="#afb1b3"/><path d="M2.6 3 L6 6 L2.6 9" fill="none" stroke="#3c3f41" stroke-width="1.6"/><rect x="6.6" y="8.6" width="5" height="1.6" fill="#3c3f41"/></svg>
<div class="t s" style="letter-spacing:-0.113px;left:553px;top:973px">Terminal</div>
<svg style="left:632.5px;top:974px" width="16" height="16" viewBox="0 0 16 16" fill="#afb1b3"><path d="M8 0.4 L15.6 4.2 L8 8 L0.4 4.2z"/><path d="M2.4 6.6 L8 9.4 L13.6 6.6 L15.6 7.6 L8 11.4 L0.4 7.6z"/><path d="M2.4 10 L8 12.8 L13.6 10 L15.6 11 L8 14.8 L0.4 11z"/></svg>
<div class="t s" style="letter-spacing:-0.265px;left:654.5px;top:973px">Python Packages</div>
<svg style="left:791px;top:974.5px" width="15" height="15" viewBox="0 0 18 18" fill="#afb1b3">
<path d="M8.9 0.3 c-3.6 0 -3.8 1.6 -3.8 2.6 v2.1 h4 v0.8 h-5.9 c-1.6 0 -2.9 1.2 -2.9 4 c0 2.8 1.2 4 2.7 4 h1.6 v-2.4 c0 -1.6 1.2 -2.7 2.7 -2.7 h4 c1.3 0 2.4 -1 2.4 -2.4 v-3.4 c0 -1.3 -1.2 -2.6 -4.8 -2.6z"/>
<path d="M9.1 17.7 c3.6 0 3.8 -1.6 3.8 -2.6 v-2.1 h-4 v-0.8 h5.9 c1.6 0 2.9 -1.2 2.9 -4 c0 -2.8 -1.2 -4 -2.7 -4 h-1.6 v2.4 c0 1.6 -1.2 2.7 -2.7 2.7 h-4 c-1.3 0 -2.4 1 -2.4 2.4 v3.4 c0 1.3 1.2 2.6 4.8 2.6z"/>
<circle cx="6.9" cy="2.6" r="0.9" fill="#3c3f41"/><circle cx="11.1" cy="15.4" r="0.9" fill="#3c3f41"/>
</svg>
<div class="t s" style="letter-spacing:-0.167px;left:811.5px;top:973px">Python Console</div>
<svg style="left:1799px;top:974px" width="17" height="17" viewBox="0 0 17 17"><path d="M8 0.2 A7.9 7.9 0 0 1 15.9 8.1 V16 H8 A7.9 7.9 0 0 1 8 0.2z" fill="#f0a732"/></svg>
<div class="t" style="left:1803px;top:973px;font-size:13.5px;font-weight:bold;color:#3c3f41">2</div>
<div class="t s" style="letter-spacing:-0.340px;left:1820.5px;top:973px">Event Log</div>
<!-- status bar -->
<svg style="left:7px;top:1000px" width="17" height="16" viewBox="0 0 17 16" fill="none" stroke="#afb1b3" stroke-width="1.2"><rect x="3.8" y="0.8" width="12" height="11.6"/><path d="M0.8 3.6 V15.2 H12.8"/></svg>
<div class="t u" style="letter-spacing:-0.063px;left:34.5px;top:998px">PEP 8: W292 no newline at end of file</div>
<div class="t u" style="letter-spacing:-0.209px;left:1549.5px;top:998px">20:42</div>
<div class="t u" style="letter-spacing:-1.445px;left:1604px;top:998px">CRLF</div>
<div class="t u" style="letter-spacing:-0.566px;left:1655.5px;top:998px;color:#787878">UTF-8</div>
<div class="t u" style="letter-spacing:-0.318px;left:1713px;top:998px">4 spaces</div>
<div class="t u" style="letter-spacing:-0.037px;left:1790.5px;top:998px">Python 3.10</div>
<svg style="left:1890px;top:1000px" width="15" height="14" viewBox="0 0 15 14"><rect x="4.4" y="6" width="10" height="7.6" fill="#afb1b3"/><path d="M1.4 6.6 V4.6 C1.4 0.6 7.2 0.6 7.2 4.6 V6.4" fill="none" stroke="#afb1b3" stroke-width="1.6"/></svg>

<!-- left stripe -->
<div class="a" style="left:0;top:72px;width:26px;height:894px;background:#3c3f41"></div>
<div class="a" style="left:26px;top:72px;width:1px;height:894px;background:#323232"></div>
<div class="v s" style="letter-spacing:0.060px;left:7px;top:124.5px;transform:rotate(-90deg)">Project</div>
<svg style="left:7px;top:132px" width="15" height="12" viewBox="0 0 15 12"><path d="M0 0 H6.4 L8 2.6 H14.4 V11.6 H0z" fill="#afb1b3"/></svg>
<div class="v s" style="letter-spacing:0.021px;left:7px;top:814px;transform:rotate(-90deg)">Structure</div>
<svg style="left:8px;top:822px" width="13" height="12" viewBox="0 0 13 12" fill="#afb1b3"><rect x="6.6" y="0" width="5.8" height="5.2"/><rect x="0" y="6.6" width="5.4" height="5.2"/><rect x="6.6" y="6.6" width="5.8" height="5.2"/></svg>
<div class="v s" style="letter-spacing:-0.337px;left:7px;top:930px;transform:rotate(-90deg)">Bookmarks</div>
<svg style="left:8px;top:936px" width="13" height="14" viewBox="0 0 13 14"><path d="M0 0 H12.6 V14 L6.3 9.4 L0 14z" fill="#afb1b3"/></svg>
<!-- right stripe -->
<div class="a" style="left:1895px;top:72px;width:25px;height:894px;background:#3c3f41"></div>
<div class="a" style="left:1894px;top:72px;width:1px;height:894px;background:#323232"></div>
<svg style="left:1900px;top:85px" width="16" height="17" viewBox="0 0 16 17" fill="#afb1b3"><ellipse cx="7.8" cy="3" rx="7.4" ry="2.8"/><path d="M0.4 5 C0.4 8.4 15.2 8.4 15.2 5 V7.2 C15.2 10.8 0.4 10.8 0.4 7.2z"/><path d="M0.4 8.8 C0.4 12.2 15.2 12.2 15.2 8.8 V11 C15.2 14.6 0.4 14.6 0.4 11z"/><path d="M0.4 12.6 C0.4 16 15.2 16 15.2 12.6 V13.6 C15.2 17.6 0.4 17.6 0.4 13.6z"/></svg>
<div class="v s" style="letter-spacing:-0.492px;left:1915px;top:106px;transform:rotate(90deg)">Database</div>
<svg style="left:1901px;top:192px" width="14" height="12" viewBox="0 0 14 12" fill="#afb1b3"><rect x="0" y="0" width="14" height="2.6"/><rect x="0" y="4" width="3.6" height="3"/><rect x="5" y="4" width="3.8" height="3"/><rect x="10.2" y="4" width="3.8" height="3"/><rect x="0" y="8.4" width="3.6" height="3"/><rect x="5" y="8.4" width="3.8" height="3"/><rect x="10.2" y="8.4" width="3.8" height="3"/></svg>
<div class="v s" style="letter-spacing:-0.364px;left:1915px;top:211px;transform:rotate(90deg)">SciView</div>

</body>
</html>
